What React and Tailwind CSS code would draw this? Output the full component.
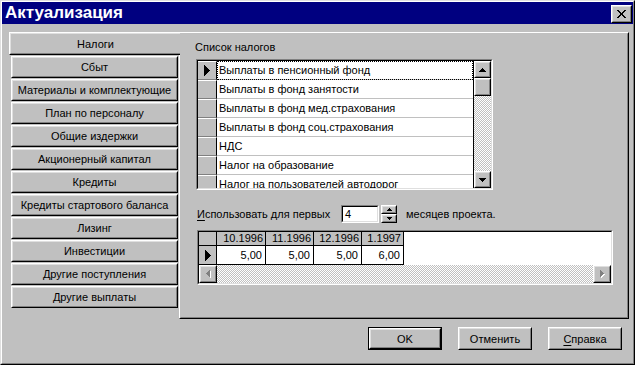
import React from 'react';

// win95-style bevels
const raisedOuter = 'border border-t-white border-l-white border-r-black border-b-black';
const raisedInner = 'border border-t-[#dfdfdf] border-l-[#dfdfdf] border-r-[#808080] border-b-[#808080]';
const sunkenOuter = 'border border-t-[#808080] border-l-[#808080] border-r-white border-b-white';
const sunkenInner = 'border border-t-black border-l-black border-r-[#dfdfdf] border-b-[#dfdfdf]';
const checker = 'bg-[image:repeating-conic-gradient(#c0c0c0_0%_25%,#ffffff_0%_50%)] bg-[length:2px_2px]';

const sections = [
  'Сбыт',
  'Материалы и комплектующие',
  'План по персоналу',
  'Общие издержки',
  'Акционерный капитал',
  'Кредиты',
  'Кредиты стартового баланса',
  'Лизинг',
  'Инвестиции',
  'Другие поступления',
  'Другие выплаты',
];

const taxes = [
  'Выплаты в пенсионный фонд',
  'Выплаты в фонд занятости',
  'Выплаты в фонд мед.страхования',
  'Выплаты в фонд соц.страхования',
  'НДС',
  'Налог на образование',
  'Налог на пользователей автодорог',
];

const months = [
  { label: '10.1996', value: '5,00', w: 'w-[49px]' },
  { label: '11.1996', value: '5,00', w: 'w-[48px]' },
  { label: '12.1996', value: '5,00', w: 'w-[48px]' },
  { label: '1.1997', value: '6,00', w: 'w-[42px]' },
];

const Arrow = ({ dir, color = '#000', size = 'sm' }) => {
  if (dir === 'right') {
    const h = size === 'lg' ? 11 : 7;
    const w = size === 'lg' ? 6 : 4;
    return (
      <svg width={w} height={h} viewBox={`0 0 ${w} ${h}`} shapeRendering="crispEdges">
        <polygon points={`0,0 ${w},${h / 2} 0,${h}`} fill={color} />
      </svg>
    );
  }
  if (dir === 'left') {
    return (
      <svg width="4" height="7" viewBox="0 0 4 7" shapeRendering="crispEdges">
        <polygon points="4,0 0,3.5 4,7" fill={color} />
      </svg>
    );
  }
  const w = size === 'xs' ? 5 : 7;
  const h = size === 'xs' ? 3 : 4;
  return (
    <svg width={w} height={h} viewBox={`0 0 ${w} ${h}`} shapeRendering="crispEdges">
      {dir === 'up' ? (
        <polygon points={`${w / 2},0 ${w},${h} 0,${h}`} fill={color} />
      ) : (
        <polygon points={`0,0 ${w},0 ${w / 2},${h}`} fill={color} />
      )}
    </svg>
  );
};

const Bevel = ({ className = '', inner = '', children }) => (
  <div className={`${raisedOuter} bg-[#c0c0c0] ${className}`}>
    <div className={`${raisedInner} h-full w-full flex items-center justify-center ${inner}`}>{children}</div>
  </div>
);

const DisabledArrow = ({ dir }) => (
  <div className="relative w-[5px] h-[8px]">
    <div className="absolute left-[1px] top-[1px]"><Arrow dir={dir} color="#ffffff" /></div>
    <div className="absolute left-0 top-0"><Arrow dir={dir} color="#808080" /></div>
  </div>
);

export default function App() {
  return (
    <div className="w-[635px] h-[365px] bg-[#c0c0c0] font-['Liberation_Sans',Arial,sans-serif] text-[11px] leading-[14px] whitespace-nowrap text-black border border-t-[#dfdfdf] border-l-[#dfdfdf] border-r-black border-b-black">
      <div className="h-full border border-t-white border-l-white border-r-[#808080] border-b-[#808080] flex flex-col">
        {/* title bar */}
        <div className="h-[22px] bg-[#000080] flex justify-between pl-[3px] pr-[1px]">
          <span className="self-center text-white text-[17px] font-bold leading-[20px]">Актуализация</span>
          <Bevel className="mt-[3px] w-[21px] h-[18px]">
            <svg width="9" height="8" viewBox="0 0 9 8" shapeRendering="crispEdges">
              <path d="M0 0h2l2.5 3 2.5-3h2L5.5 4 9 8H7L4.5 5 2 8H0l3.5-4z" fill="#000" />
            </svg>
          </Bevel>
        </div>

        <div className="flex pt-[8px] pl-[7px]">
          {/* left section buttons */}
          <div className="w-[170px] flex flex-col gap-[1px]">
            <div className="relative z-10 w-[171px] h-[23px] bg-[#c0c0c0] border-t border-l border-b border-t-white border-l-white border-b-black">
              <div className="h-full border-t border-l border-b border-t-[#dfdfdf] border-l-[#dfdfdf] border-b-[#808080] flex items-center justify-center">
                Налоги
              </div>
            </div>
            {sections.map((s) => (
              <Bevel key={s} className="ml-[2px] w-[167px] h-[22px]">
                {s}
              </Bevel>
            ))}
          </div>

          {/* main panel */}
          <div className="w-[450px] h-[287px] border border-t-white border-l-white border-r-black border-b-black">
            <div className="h-full border border-t-transparent border-l-transparent border-r-[#808080] border-b-[#808080] pl-[14px] pt-[6px] flex flex-col">
              <div>Список налогов</div>

              {/* tax list */}
              <div className={`ml-[1px] mt-[5px] w-[297px] h-[131px] ${sunkenOuter}`}>
                <div className={`h-full ${sunkenInner} bg-white flex`}>
                  <div className="flex-1 overflow-hidden">
                    {taxes.map((t, i) => (
                      <div key={t} className="flex h-[19px]">
                        <div className="w-[19px] bg-[#c0c0c0] border-t border-r border-b border-t-white border-r-black border-b-[#808080] flex items-center justify-center">
                          {i === 0 && <Arrow dir="right" size="lg" />}
                        </div>
                        <div
                          className={`flex-1 flex items-center pl-[2px] border-b border-b-[#c0c0c0] ${
                            i === 0 ? 'outline-1 outline-dotted outline-black -outline-offset-1' : ''
                          }`}
                        >
                          {t}
                        </div>
                      </div>
                    ))}
                  </div>
                  <div className="w-[18px] flex flex-col border-l border-l-black">
                    <Bevel className="h-[17px]">
                      <Arrow dir="up" />
                    </Bevel>
                    <Bevel className="h-[18px]" />
                    <div className={`flex-1 ${checker}`} />
                    <Bevel className="h-[17px]">
                      <Arrow dir="down" />
                    </Bevel>
                  </div>
                </div>
              </div>

              {/* months spinner */}
              <div className="ml-[2px] mt-[15px] h-[18px] flex items-center">
                <span className="w-[144px]">
                  <span className="underline underline-offset-2">И</span>спользовать для первых
                </span>
                <div className={`w-[38px] h-[18px] ${sunkenOuter}`}>
                  <div className={`h-full ${sunkenInner} bg-white pl-[2px] leading-[14px]`}>4</div>
                </div>
                <div className="ml-[2px] w-[16px] h-[18px] flex flex-col">
                  <Bevel className="h-[9px]">
                    <Arrow dir="up" size="xs" />
                  </Bevel>
                  <Bevel className="h-[9px]">
                    <Arrow dir="down" size="xs" />
                  </Bevel>
                </div>
                <span className="ml-[9px]">месяцев проекта.</span>
              </div>

              {/* data grid */}
              <div className={`ml-[2px] mt-[7px] w-[416px] h-[55px] ${sunkenOuter}`}>
                <div className={`h-full ${sunkenInner} bg-white flex flex-col`}>
                  <div className="flex h-[14px]">
                    <div className="w-[18px] bg-[#c0c0c0] border-r border-b border-black" />
                    {months.map((m) => (
                      <div
                        key={m.label}
                        className={`${m.w} bg-[#c0c0c0] border-r border-b border-black text-right pr-[2px] leading-[13px]`}
                      >
                        {m.label}
                      </div>
                    ))}
                  </div>
                  <div className="flex h-[19px]">
                    <div className="w-[18px] bg-[#c0c0c0] border-r border-b border-black flex items-center justify-center">
                      <Arrow dir="right" size="lg" />
                    </div>
                    {months.map((m) => (
                      <div
                        key={m.label}
                        className={`${m.w} border-r border-b border-black flex items-center justify-end pr-[3px]`}
                      >
                        {m.value}
                      </div>
                    ))}
                  </div>
                  <div className="flex h-[18px]">
                    <Bevel className="w-[18px]">
                      <DisabledArrow dir="left" />
                    </Bevel>
                    <div className={`flex-1 ${checker}`} />
                    <Bevel className="w-[18px]">
                      <DisabledArrow dir="right" />
                    </Bevel>
                  </div>
                </div>
              </div>
            </div>
          </div>
        </div>

        {/* dialog buttons */}
        <div className="flex justify-end gap-[16px] pr-[11px] mt-[8px]">
          <div className="w-[74px] h-[23px] border border-black">
            <Bevel className="h-full">OK</Bevel>
          </div>
          <Bevel className="w-[74px] h-[23px]">Отменить</Bevel>
          <Bevel className="w-[74px] h-[23px]">
            <span>
              <span className="underline underline-offset-2">С</span>правка
            </span>
          </Bevel>
        </div>
      </div>
    </div>
  );
}
